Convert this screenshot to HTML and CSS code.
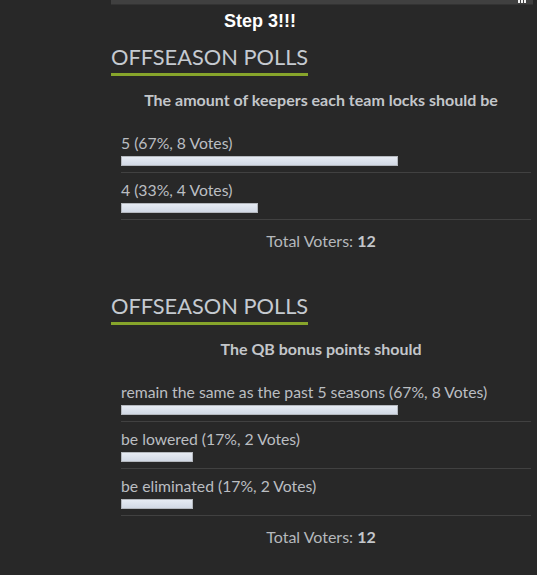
FILE: index.html
```html
<!DOCTYPE html>
<html lang="en">
<head>
  <meta charset="UTF-8" />
  <title>Offseason Polls</title>
  <link rel="stylesheet" href="styles.css">
</head>
<body>

<div class="page">
  <div class="top-bar">
    <span class="grip"><i></i><i></i><i></i></span>
  </div>

  <div class="step">Step 3!!!</div>

  <div class="poll">
    <h2 class="poll-title">OFFSEASON POLLS</h2>
    <p class="question">The amount of keepers each team locks should be</p>
    <ul class="options">
      <li>
        <div class="label">5 (67%, 8 Votes)</div>
        <div class="bar" style="width: 67%"></div>
      </li>
      <li>
        <div class="label">4 (33%, 4 Votes)</div>
        <div class="bar" style="width: 33%"></div>
      </li>
    </ul>
    <p class="total">Total Voters: <strong>12</strong></p>
  </div>

  <div class="poll">
    <h2 class="poll-title">OFFSEASON POLLS</h2>
    <p class="question">The QB bonus points should</p>
    <ul class="options">
      <li>
        <div class="label">remain the same as the past 5 seasons (67%, 8 Votes)</div>
        <div class="bar" style="width: 67%"></div>
      </li>
      <li>
        <div class="label">be lowered (17%, 2 Votes)</div>
        <div class="bar" style="width: 17%"></div>
      </li>
      <li>
        <div class="label">be eliminated (17%, 2 Votes)</div>
        <div class="bar" style="width: 17%"></div>
      </li>
    </ul>
    <p class="total">Total Voters: <strong>12</strong></p>
  </div>
</div>

</body>
</html>
```

FILE: styles.css
```css
body {
  margin: 0;
  background: #282828;
  font-family: Lato, "Noto Sans", sans-serif;
  color: #bbbec2;
}

.page {
  margin-left: 111px;
  width: 420px;
}

.top-bar {
  height: 4px;
  width: 422px;
  background: #404040;
  border-bottom: 1px solid #333;
  display: flex;
  justify-content: flex-end;
}

.grip {
  display: flex;
  gap: 1px;
  margin-right: 7px;
}

.grip i {
  width: 2px;
  height: 3px;
  background: #f2f2f2;
}

.step {
  width: 298px;
  margin-top: 5px;
  text-align: center;
  font-family: "Liberation Sans", Arial, sans-serif;
  font-weight: bold;
  font-size: 18px;
  line-height: 22px;
  color: #fff;
}

.poll {
  margin-bottom: 30px;
}

.poll-title {
  display: inline-block;
  margin: 12px 0 0;
  padding-bottom: 3px;
  font-size: 21.8px;
  font-weight: normal;
  line-height: 26px;
  color: #c5cad0;
  border-bottom: 3px solid #87a52b;
}

.question {
  margin: 14px 0 16px;
  text-align: center;
  font-size: 16px;
  font-weight: bold;
  line-height: 20px;
  color: #c3c6ca;
}

.options {
  list-style: none;
  margin: 0;
  padding: 0 0 0 10px;
}

.options li {
  padding: 7px 0 6px;
  border-bottom: 1px solid #414141;
}

.label {
  font-size: 15.75px;
  line-height: 20px;
  margin-bottom: 3px;
}

.bar {
  height: 8px;
  background: linear-gradient(#e6ebf3, #d2d9e5);
  border: 1px solid #b4b8be;
}

.total {
  margin: 11px 0 0;
  text-align: center;
  font-size: 16px;
  line-height: 20px;
  color: #b5b8bc;
}

.total strong {
  color: #c3c6ca;
}
```
